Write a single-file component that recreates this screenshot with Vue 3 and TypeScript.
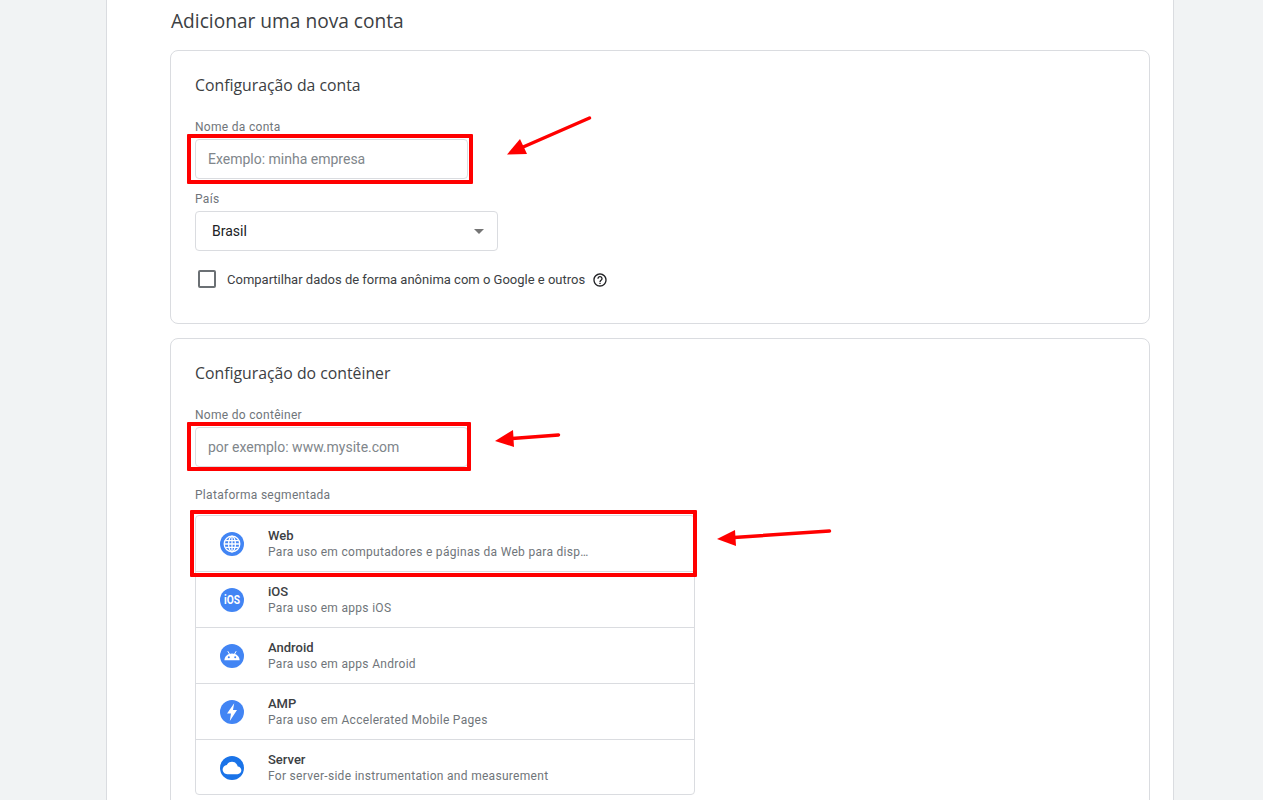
<script setup lang="ts">
type Platform = { id: string; name: string; desc: string; color: string };

const platforms: Platform[] = [
  { id: "web", name: "Web", desc: "Para uso em computadores e páginas da Web para disp…", color: "#4285f4" },
  { id: "ios", name: "iOS", desc: "Para uso em apps iOS", color: "#4285f4" },
  { id: "android", name: "Android", desc: "Para uso em apps Android", color: "#4285f4" },
  { id: "amp", name: "AMP", desc: "Para uso em Accelerated Mobile Pages", color: "#4285f4" },
  { id: "server", name: "Server", desc: "For server-side instrumentation and measurement", color: "#1a73e8" },
];
</script>

<template>
  <div class="page">
    <main class="sheet">
      <h1 class="heading">Adicionar uma nova conta</h1>

      <section class="card first">
        <h2 class="card-title">Configuração da conta</h2>
        <label class="label label-top">Nome da conta</label>
        <div class="field">
          <input class="input" placeholder="Exemplo: minha empresa" />
          <span class="mark mark-account"></span>
        </div>
        <label class="label label-mid">País</label>
        <div class="select">
          <span>Brasil</span>
          <span class="caret"></span>
        </div>
        <div class="check-row">
          <span class="checkbox"></span>
          <span class="check-text">Compartilhar dados de forma anônima com o Google e outros</span>
          <svg class="help" viewBox="0 0 24 24" width="16" height="16">
            <path
              fill="#202124"
              d="M11 18h2v-2h-2v2zm1-16C6.48 2 2 6.48 2 12s4.48 10 10 10 10-4.48 10-10S17.52 2 12 2zm0 18c-4.41 0-8-3.59-8-8s3.59-8 8-8 8 3.59 8 8-3.59 8-8 8zm0-14c-2.21 0-4 1.79-4 4h2c0-1.1.9-2 2-2s2 .9 2 2c0 2-3 1.75-3 5h2c0-2.25 3-2.5 3-5 0-2.21-1.79-4-4-4z"
            />
          </svg>
        </div>
      </section>

      <section class="card">
        <h2 class="card-title">Configuração do contêiner</h2>
        <label class="label label-top">Nome do contêiner</label>
        <div class="field">
          <input class="input" placeholder="por exemplo: www.mysite.com" />
          <span class="mark mark-container"></span>
        </div>
        <label class="label label-platform">Plataforma segmentada</label>
        <div class="list">
          <span class="mark mark-web"></span>
          <div v-for="p in platforms" :key="p.id" class="row">
            <svg class="row-icon" viewBox="0 0 24 24" width="24" height="24">
              <circle cx="12" cy="12" r="12" :fill="p.color" />
              <g v-if="p.id === 'web'" fill="none" stroke="#fff" stroke-width="1.3">
                <circle cx="12" cy="12" r="7.8" />
                <ellipse cx="12" cy="12" rx="3.4" ry="7.8" />
                <path d="M12 4.200v15.600M4.200 12h15.600M5.400 8.600h13.200M5.400 15.400h13.200" />
              </g>
              <text
                v-else-if="p.id === 'ios'"
                x="12"
                y="16.400"
                text-anchor="middle"
                textLength="16"
                lengthAdjust="spacingAndGlyphs"
                class="ios-glyph"
              >iOS</text>
              <g v-else-if="p.id === 'android'" fill="#fff">
                <path d="M4.400 16.200c.2-3.800 3.400-6.600 7.600-6.600s7.400 2.800 7.600 6.600z" />
                <path d="M7.800 7.200l1.900 3.200M16.200 7.200l-1.900 3.200" stroke="#fff" stroke-width="1" />
                <circle cx="8.800" cy="13.300" r="1" :fill="p.color" />
                <circle cx="15.200" cy="13.300" r="1" :fill="p.color" />
              </g>
              <path v-else-if="p.id === 'amp'" fill="#fff" d="M14.200 3.300 7 13.400h4L9.800 21 17 10h-4z" />
              <path
                v-else
                fill="#fff"
                transform="translate(2.640 2.640) scale(.78)"
                d="M19.350 10.040C18.670 6.590 15.640 4 12 4 9.110 4 6.600 5.640 5.350 8.040 2.340 8.360 0 10.910 0 14c0 3.310 2.690 6 6 6h13c2.760 0 5-2.240 5-5 0-2.640-2.050-4.780-4.650-4.960z"
              />
            </svg>
            <div class="row-text">
              <div class="row-name">{{ p.name }}</div>
              <div class="row-desc">{{ p.desc }}</div>
            </div>
          </div>
        </div>
      </section>
    </main>

    <!-- setas vermelhas da anotação -->
    <svg class="arrows" width="1263" height="800" viewBox="0 0 1263 800">
      <g stroke="#f00" stroke-width="3.5" stroke-linecap="round" fill="#f00">
        <path d="M589.500 118 522 147.500" />
        <path d="M558.500 435 512 438.500" />
        <path d="M829.500 531 734 537.500" />
      </g>
      <g fill="#f00">
        <polygon points="507,154.500 520,139 527,154" />
        <polygon points="495,441 513,430 514,447" />
        <polygon points="717,539 735,530 736,546" />
      </g>
    </svg>
  </div>
</template>

<style scoped>
.page {
  position: relative;
  height: 800px;
  overflow: hidden;
  background: #f1f3f4;
  font-family: Roboto, "Liberation Sans", sans-serif;
}

.sheet {
  width: 1068px;
  height: 1000px;
  margin-left: 106px;
  padding: 8px 23px 0 63px;
  box-sizing: border-box;
  background: #fff;
  border-left: 1px solid #dadce0;
  border-right: 1px solid #dadce0;
}

.heading {
  margin: 0 0 14px 1px;
  font: 400 19.15px/27px "Open Sans", sans-serif;
  padding-bottom: 1px;
  color: #3c4043;
}

.card {
  width: 980px;
  box-sizing: border-box;
  padding: 24px 24px 35px;
  margin-bottom: 14px;
  border: 1px solid #dadce0;
  border-radius: 8px;
  background: #fff;
}

.card-title {
  margin: 0;
  padding-bottom: 1px;
  font: 400 15.8px/21px "Open Sans", sans-serif;
  color: #3c4043;
}

.label {
  display: block;
  font-size: 12px;
  line-height: 14px;
  letter-spacing: 0.3px;
  color: #70757a;
}

.label-top {
  margin: 23px 0 5px;
}

.label-mid {
  margin: 13px 0 5px;
}

.label-platform {
  margin: 21px 0 13px;
}

.field {
  position: relative;
  width: 273px;
  height: 40px;
}

.input {
  display: block;
  width: 100%;
  height: 100%;
  box-sizing: border-box;
  padding: 0 12px;
  border: 1px solid #dadce0;
  border-radius: 4px;
  outline: none;
  font: 400 14px Roboto, sans-serif;
  color: #202124;
  background: #fff;
}

.input::placeholder {
  color: #80868b;
  opacity: 1;
}

.mark {
  position: absolute;
  border: 4px solid #f00;
  border-radius: 1px;
  pointer-events: none;
}

.mark-account {
  inset: -5px -5px -5px -8px;
}

.mark-container {
  inset: -5px -3px -4px -8px;
}

.mark-web {
  top: -6px;
  left: -6px;
  right: -3px;
  height: 67px;
  box-sizing: border-box;
  z-index: 1;
}

.select {
  display: flex;
  align-items: center;
  justify-content: space-between;
  width: 303px;
  height: 40px;
  box-sizing: border-box;
  padding: 0 13px 0 16px;
  border: 1px solid #dadce0;
  border-radius: 4px;
  font-size: 14px;
  color: #202124;
}

.caret {
  width: 0;
  height: 0;
  border-left: 5px solid transparent;
  border-right: 5px solid transparent;
  border-top: 5px solid #757575;
}

.check-row {
  display: flex;
  align-items: center;
  height: 18px;
  margin-top: 19px;
  padding-left: 3px;
}

.checkbox {
  width: 18px;
  height: 18px;
  box-sizing: border-box;
  border: 2px solid #6b7074;
  border-radius: 2px;
}

.check-text {
  margin-left: 11px;
  margin-top: 1px;
  font-size: 13px;
  color: #3c4043;
}

.help {
  margin-left: 7px;
  margin-top: 2px;
}

.list {
  position: relative;
  width: 500px;
  box-sizing: border-box;
  border: 1px solid #dadce0;
  border-radius: 4px;
}

.row {
  display: flex;
  align-items: center;
  height: 56px;
  box-sizing: border-box;
  padding-left: 24px;
  border-bottom: 1px solid #dadce0;
}

.row:last-child {
  margin-bottom: -2px;
  border-bottom-color: transparent;
}

.row-icon {
  flex: none;
}

.ios-glyph {
  font: 700 12px Roboto, sans-serif;
  fill: #fff;
}

.row-text {
  margin-left: 24px;
}

.row-name {
  font-size: 13px;
  font-weight: 500;
  line-height: 16px;
  color: #3c4043;
}

.row-desc {
  white-space: nowrap;
  font-size: 12px;
  line-height: 16px;
  letter-spacing: 0.3px;
  color: #70757a;
}

.arrows {
  position: absolute;
  top: 0;
  left: 0;
  pointer-events: none;
}
</style>
